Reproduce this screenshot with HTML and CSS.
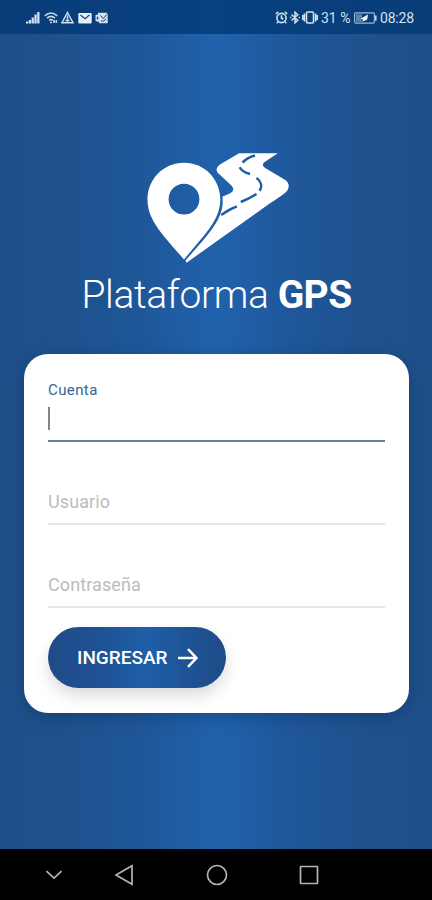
FILE: index.html
```html
<!DOCTYPE html>
<html lang="es">
<head>
  <meta charset="UTF-8" />
  <meta name="viewport" content="width=device-width, initial-scale=1.0"/>
  <title>Plataforma GPS</title>
  <link rel="stylesheet" href="styles.css">
</head>
<body>
<div class="status-bar">
  <div class="status-left">
    <svg width="14" height="13" viewBox="0 0 14 13" fill="#d3e0ee">
      <path d="M0 10.500h2.300v2H0zM2.800 9h2.300v3.500H2.800zM5.600 6.500h2.300v6H5.600zM8.400 3.500h2.300v9H8.400zM11.200 1h2.300v11.500h-2.300z"/>
    </svg>
    <svg width="14" height="13" viewBox="0 0 14 13" fill="none" stroke="#c5d5e8" stroke-width="1.600">
      <path d="M.8 4.800Q7-.8 13.200 4.800M3 7.200q4-3.500 8 0M5.200 9.300q1.800-1.500 3.600 0"/>
      <path d="M6 11.500h2M10 9v3M12.300 9v3"/>
    </svg>
    <svg width="13" height="13" viewBox="0 0 13 13" fill="none" stroke="#d3e0ee" stroke-width="1.400">
      <path d="M6.500 1.500L12 11.700H1z"/>
      <path d="M6.500 4.500v4M6.500 9.300v1.500M4.500 9.500h4"/>
    </svg>
    <svg width="14" height="12" viewBox="0 0 14 12">
      <rect x=".3" y="1" width="13.400" height="10.500" rx="1" fill="#e6eef7"/>
      <path d="M2.500 3L7 6.700 11.500 3" fill="none" stroke="#0a437e" stroke-width="1.200"/>
    </svg>
    <svg width="13" height="12" viewBox="0 0 13 12">
      <path d="M3 .8h8.500l1.200 1.500v9H4V10L.5 9V3L3 2.500z" fill="#d3e0ee"/>
      <path d="M5.500 3.500l2.800 3 3.600-4M6 9q3 1 5-2" fill="none" stroke="#0a437e"/>
      <ellipse cx="2.500" cy="6" rx=".8" ry="1.500" fill="#0a437e"/>
    </svg>
  </div>
  <div class="status-right">
    <svg width="13" height="13" viewBox="0 0 13 13" fill="none" stroke="#d3e0ee" stroke-width="1.600">
      <circle cx="6.500" cy="7" r="4.600"/>
      <path d="M.8 3L3.300.9M12.200 3L9.700.9M6.500 4.300v3l1.800 1M3 11l-1.300 1.300M10 11l1.300 1.300"/>
    </svg>
    <svg width="10" height="13" viewBox="0 0 10 13" fill="none" stroke="#d3e0ee" stroke-width="1.500">
      <path d="M1.500 3.500l6.300 5.700L5 11.800V1.200l2.800 2.600-6.300 5.700M.2 6.500h1.300M8.500 6.500h1.300"/>
    </svg>
    <svg width="16" height="13" viewBox="0 0 16 13" fill="none" stroke="#d3e0ee" stroke-width="1.600">
      <rect x="4.500" y="1" width="7" height="11" rx="1"/>
      <path d="M2.400 2.500v8M.7 4v5M13.600 2.500v8M15.300 4v5"/>
    </svg>
    <span class="percent">31 %</span>
    <svg class="battery" width="23" height="12" viewBox="0 0 23 12">
      <rect x=".6" y=".9" width="19.800" height="10.200" rx="1.300" fill="none" stroke="#9db7d2" stroke-width="1.200"/>
      <rect x="2" y="2.300" width="6" height="7.400" fill="#5d84ae"/>
      <path d="M21.800 3.500v5" stroke="#d3e0ee" stroke-width="1.500"/>
      <path d="M14 2.500L7 6.600l2.200.8-1 2.400 5-2.300z" fill="#fff"/>
    </svg>
    <span class="clock">08:28</span>
  </div>
</div>

<div class="screen">
  <svg class="logo" width="142" height="111" viewBox="0 0 142 111">
    <path fill="#fff" fill-rule="evenodd" d="M37 10.700C16.500 10.700.5 27 .5 47.500c0 20.500 14.500 34.500 36.500 60C58 82 73.300 68 73.300 47.500 73.300 27 57.500 10.700 37 10.700zM37 31.800a15.400 15.400 0 1 1 0 30.800 15.400 15.400 0 0 1 0-30.800z"/>
    <path fill="#fff" d="M92 1.200h38.800L118 9.700c-3 2-2.800 4.500.5 6.500l19 11.200c5.500 3.200 5.600 9.300.4 13.600-4 3.300-9.400 6.700-14.900 10.300L39.500 110.800l-1-2.300C57 87 74 71 75.600 52.500c.3-3 0-5.500 0-8 4.500-2 8-2.800 9.800-5 1.800-2.300.5-4.500-1.800-6.700L71.500 21.500c-3-3-2.300-6.200 1.500-9z"/>
    <g fill="none" stroke="#1f5da5" stroke-width="2.500">
      <path d="M108 3.500c-5 1.300-9 3.500-12.500 7M92.700 15.200c1.800 3.500 5.300 5.500 10.300 6.800M109.500 26c4.800 3.500 6 8.500 3 12.700M109.500 42c-5 3.200-10 5.700-15.700 8M89.800 54.500c-5 1.700-9.800 4.500-15.500 8.500"/>
    </g>
  </svg>
  <div class="title">Plataforma <b>GPS</b></div>

  <form class="card">
    <div class="field active">
      <label>Cuenta</label>
      <div class="value"><span class="caret"></span></div>
    </div>
    <div class="field">
      <label>Usuario</label>
    </div>
    <div class="field">
      <label>Contraseña</label>
    </div>
    <button type="button" class="login-btn">
      INGRESAR
      <svg width="20" height="20" viewBox="0 0 20 20" fill="none" stroke="#fff" stroke-width="2.500">
        <path d="M0 10h18M10 1.200l8.500 8.800-8.500 8.800"/>
      </svg>
    </button>
  </form>
</div>

<div class="nav-bar">
  <svg width="18" height="10" viewBox="0 0 18 10"><path d="M1.500 1.200L9 8.200l7.500-7"/></svg>
  <svg width="20" height="22" viewBox="0 0 20 22"><path d="M18 1.800v18.400L2 11z"/></svg>
  <svg width="22" height="22" viewBox="0 0 22 22"><circle cx="11" cy="11" r="9.500"/></svg>
  <svg width="20" height="20" viewBox="0 0 20 20"><rect x="1.500" y="1.500" width="17" height="17" rx=".5"/></svg>
</div>
</body>
</html>
```

FILE: styles.css
```css
* {
  box-sizing: border-box;
}
body {
  margin: 0;
  height: 900px;
  display: flex;
  flex-direction: column;
  font-family: Roboto, sans-serif;
  background-color: #000;
  overflow: hidden;
}
svg {
  display: block;
  flex-shrink: 0;
}
.status-bar {
  height: 34px;
  padding: 1px 18px 0 26px;
  display: flex;
  justify-content: space-between;
  align-items: center;
  background: linear-gradient(90deg, #073c78, #07417f 50%, #073c78);
  color: #d3e0ee;
  font-size: 14px;
}
.status-left {
  display: flex;
  align-items: center;
  gap: 3.500px;
}
.status-right {
  display: flex;
  align-items: center;
}
.status-right svg + svg {
  margin-left: 2px;
}
.percent {
  margin-left: 3px;
  width: 33px;
  white-space: nowrap;
}
.clock {
  margin-left: 3px;
  width: 34px;
  letter-spacing: -0.2px;
}
.screen {
  height: 815px;
  padding: 118px 23px 0 24px;
  display: flex;
  flex-direction: column;
  align-items: center;
  background: linear-gradient(90deg, #1e4f89 0%, #1e518d 15%, #1f5799 33%, #2061ac 49%, #2061ac 52%, #1f5799 68%, #1e518d 85%, #1e4f89 100%);
}
.logo {
  margin-left: 3px;
}
.title {
  margin-top: 9px;
  height: 46px;
  line-height: 46px;
  font-size: 39px;
  font-weight: 300;
  letter-spacing: -0.35px;
  color: #fff;
  white-space: nowrap;
}
.title b {
  font-weight: 700;
  letter-spacing: -0.6px;
}
.card {
  margin-top: 36px;
  width: 385px;
  height: 359px;
  padding: 27px 24px 0;
  border-radius: 24px;
  background-color: #fff;
  box-shadow: 0 4px 16px rgba(10, 45, 85, 0.4);
}
.field {
  height: 83px;
  padding-top: 49px;
  border-bottom: 2px solid #e6e6e6;
  color: #bcbcbc;
  font-size: 18px;
  line-height: 22px;
  letter-spacing: 0.1px;
}
.field label {
  display: block;
}
.field.active {
  height: 61px;
  padding-top: 0;
  border-bottom: 2px solid #5f7fa3;
  color: #386396;
  font-size: 15px;
  line-height: 18px;
  letter-spacing: 0.4px;
}
.value {
  height: 40px;
  padding-top: 8px;
}
.caret {
  display: block;
  width: 1.5px;
  height: 23px;
  background-color: #858585;
}
.login-btn {
  margin-top: 19px;
  width: 178px;
  height: 61px;
  padding: 0 28px 0 29px;
  display: flex;
  align-items: center;
  justify-content: space-between;
  border: none;
  border-radius: 31px;
  background: linear-gradient(90deg, #1e4c87, #1e5091 25%, #1f5fa8 55%, #1e5395 78%, #1e4c87);
  box-shadow: 0 8px 15px rgba(0, 0, 0, 0.14);
  color: #fff;
  font-family: inherit;
  font-size: 19px;
  font-weight: 500;
  white-space: nowrap;
  cursor: pointer;
}
.nav-bar {
  height: 51px;
  padding-left: 45px;
  display: flex;
  align-items: center;
  background-color: #000;
}
.nav-bar svg {
  fill: none;
  stroke: #b4b4b4;
  stroke-width: 1.7;
}
.nav-bar svg:nth-child(2) {
  margin-left: 51px;
}
.nav-bar svg:nth-child(3) {
  margin-left: 72px;
}
.nav-bar svg:nth-child(4) {
  margin-left: 71px;
}
```
